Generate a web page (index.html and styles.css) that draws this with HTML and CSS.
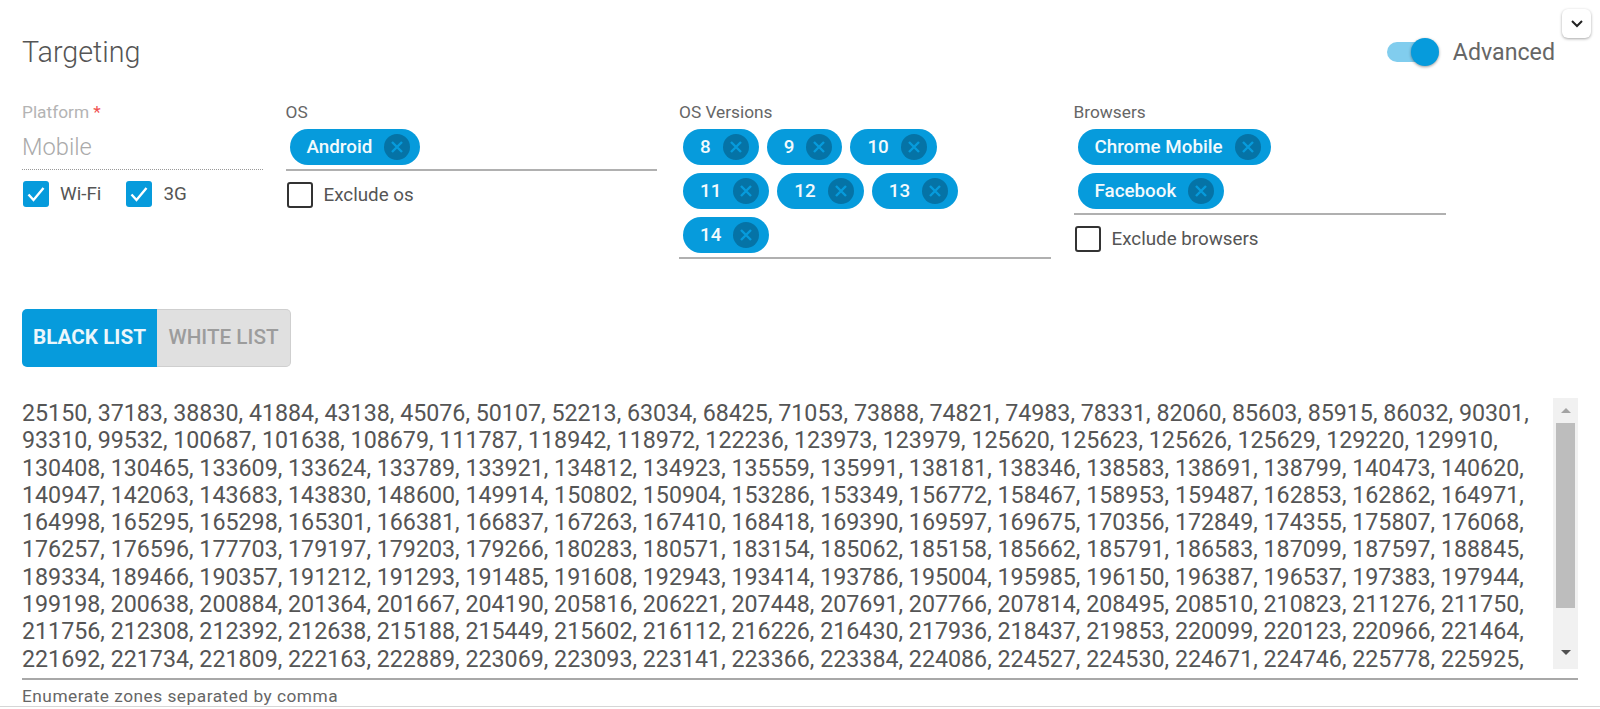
FILE: index.html
```html
<!DOCTYPE html>
<html lang="en">
<head>
<meta charset="utf-8">
<title>Targeting</title>
<link rel="stylesheet" href="styles.css">
</head>
<body>
<main class="panel">
  <button class="collapse" type="button" aria-label="Collapse">
    <svg width="14" height="9" viewBox="0 0 14 9"><path d="M2 2l5 5 5-5" fill="none" stroke="#222" stroke-width="2"/></svg>
  </button>
  <header class="head">
    <h1 class="title">Targeting</h1>
    <div class="advanced">
      <span class="toggle"><span class="knob"></span></span>
      <span class="advanced-label">Advanced</span>
    </div>
  </header>
  <section class="fields">
    <div class="col col-platform">
      <div class="label label-muted">Platform <span class="req">*</span></div>
      <div class="static">Mobile</div>
      <div class="checks">
        <label class="check"><span class="box on"><svg width="20" height="18" viewBox="0 0 20 18"><path d="M2.500 9.500l5 5.500 10-12" fill="none" stroke="#fff" stroke-width="2.400"/></svg></span>Wi-Fi</label>
        <label class="check"><span class="box on"><svg width="20" height="18" viewBox="0 0 20 18"><path d="M2.500 9.500l5 5.500 10-12" fill="none" stroke="#fff" stroke-width="2.400"/></svg></span>3G</label>
      </div>
    </div>
    <div class="col">
      <div class="label">OS</div>
      <div class="chips">
        <span class="chip">Android<span class="x"><svg width="14" height="14" viewBox="0 0 14 14"><path d="M2 2l10 10M12 2L2 12"/></svg></span></span>
      </div>
      <div class="checks"><label class="check"><span class="box"></span>Exclude os</label></div>
    </div>
    <div class="col">
      <div class="label">OS Versions</div>
      <div class="chips">
        <span class="chip">8<span class="x"><svg width="14" height="14" viewBox="0 0 14 14"><path d="M2 2l10 10M12 2L2 12"/></svg></span></span>
        <span class="chip">9<span class="x"><svg width="14" height="14" viewBox="0 0 14 14"><path d="M2 2l10 10M12 2L2 12"/></svg></span></span>
        <span class="chip">10<span class="x"><svg width="14" height="14" viewBox="0 0 14 14"><path d="M2 2l10 10M12 2L2 12"/></svg></span></span>
        <span class="chip">11<span class="x"><svg width="14" height="14" viewBox="0 0 14 14"><path d="M2 2l10 10M12 2L2 12"/></svg></span></span>
        <span class="chip">12<span class="x"><svg width="14" height="14" viewBox="0 0 14 14"><path d="M2 2l10 10M12 2L2 12"/></svg></span></span>
        <span class="chip">13<span class="x"><svg width="14" height="14" viewBox="0 0 14 14"><path d="M2 2l10 10M12 2L2 12"/></svg></span></span>
        <span class="chip">14<span class="x"><svg width="14" height="14" viewBox="0 0 14 14"><path d="M2 2l10 10M12 2L2 12"/></svg></span></span>
      </div>
    </div>
    <div class="col">
      <div class="label">Browsers</div>
      <div class="chips">
        <span class="chip">Chrome Mobile<span class="x"><svg width="14" height="14" viewBox="0 0 14 14"><path d="M2 2l10 10M12 2L2 12"/></svg></span></span>
        <span class="chip">Facebook<span class="x"><svg width="14" height="14" viewBox="0 0 14 14"><path d="M2 2l10 10M12 2L2 12"/></svg></span></span>
      </div>
      <div class="checks"><label class="check"><span class="box"></span>Exclude browsers</label></div>
    </div>
  </section>
  <div class="listmode">
    <button class="mode mode-on" type="button">BLACK LIST</button><button class="mode mode-off" type="button">WHITE LIST</button>
  </div>
  <section class="zones">
    <div class="zones-box">
      <div class="zones-text">25150, 37183, 38830, 41884, 43138, 45076, 50107, 52213, 63034, 68425, 71053, 73888, 74821, 74983, 78331, 82060, 85603, 85915, 86032, 90301,
93310, 99532, 100687, 101638, 108679, 111787, 118942, 118972, 122236, 123973, 123979, 125620, 125623, 125626, 125629, 129220, 129910,
130408, 130465, 133609, 133624, 133789, 133921, 134812, 134923, 135559, 135991, 138181, 138346, 138583, 138691, 138799, 140473, 140620,
140947, 142063, 143683, 143830, 148600, 149914, 150802, 150904, 153286, 153349, 156772, 158467, 158953, 159487, 162853, 162862, 164971,
164998, 165295, 165298, 165301, 166381, 166837, 167263, 167410, 168418, 169390, 169597, 169675, 170356, 172849, 174355, 175807, 176068,
176257, 176596, 177703, 179197, 179203, 179266, 180283, 180571, 183154, 185062, 185158, 185662, 185791, 186583, 187099, 187597, 188845,
189334, 189466, 190357, 191212, 191293, 191485, 191608, 192943, 193414, 193786, 195004, 195985, 196150, 196387, 196537, 197383, 197944,
199198, 200638, 200884, 201364, 201667, 204190, 205816, 206221, 207448, 207691, 207766, 207814, 208495, 208510, 210823, 211276, 211750,
211756, 212308, 212392, 212638, 215188, 215449, 215602, 216112, 216226, 216430, 217936, 218437, 219853, 220099, 220123, 220966, 221464,
221692, 221734, 221809, 222163, 222889, 223069, 223093, 223141, 223366, 223384, 224086, 224527, 224530, 224671, 224746, 225778, 225925,</div>
      <div class="scrollbar">
        <span class="arrow arrow-up"></span>
        <span class="thumb"></span>
        <span class="arrow arrow-down"></span>
      </div>
    </div>
    <div class="hint">Enumerate zones separated by comma</div>
  </section>
</main>
</body>
</html>
```
FILE: styles.css
```css
* { box-sizing: border-box; }
html, body { margin: 0; padding: 0; height: 100%; background: #fff; overflow: hidden; }
body { font-family: Roboto, "Liberation Sans", sans-serif; color: #555; }
.panel { position: relative; height: 707px; border-bottom: 1px solid #d6d6d6; padding: 0 22px; }
.collapse { position: absolute; top: 9px; right: 9px; width: 29px; height: 29px; padding: 0; border: 0; border-radius: 6px; background: #fff; box-shadow: 0 1px 3px rgba(0,0,0,.35); display: flex; align-items: center; justify-content: center; }
.head { display: flex; justify-content: space-between; align-items: center; height: 104px; padding-right: 23px; }
.title { margin: 0; font-size: 28.700px; font-weight: 300; color: #555; }
.advanced { display: flex; align-items: center; gap: 21px; }
.toggle { position: relative; display: block; width: 45px; height: 20px; border-radius: 10px; background: #81cdee; }
.knob { position: absolute; top: -4px; right: -7px; width: 28px; height: 28px; border-radius: 50%; background: #069bdc; box-shadow: 0 1px 3px rgba(0,0,0,.4); }
.advanced-label { font-size: 23.200px; font-weight: 400; color: #666; }
.fields { display: grid; grid-template-columns: 241px 371px 372px 372px; column-gap: 22.500px; height: 205px; }
.label { font-size: 17.300px; line-height: 16px; color: #666; height: 25px; }
.label-muted { color: #b4b4b4; }
.req { color: #f05050; }
.static { height: 41px; border-bottom: 1px dotted #999; font-size: 23.700px; line-height: 36px; font-weight: 300; color: #aaa; }
.chips { display: flex; flex-wrap: wrap; gap: 8px; padding: 0 30px 4px 4px; border-bottom: 2px solid #b0b0b0; }
.chip { display: flex; align-items: center; justify-content: space-between; height: 36px; padding: 0 10px 0 17px; gap: 12px; border-radius: 18px; background: #069bdc; color: #f2fafd; font-size: 18.800px; font-weight: 500; }
.x { display: flex; align-items: center; justify-content: center; width: 26px; height: 26px; border-radius: 50%; background: #0573a6; }
.x path { fill: none; stroke: #069bdc; stroke-width: 2.400; }
.checks { display: flex; gap: 24px; padding-top: 11px; }
.check { display: flex; align-items: center; gap: 11px; font-size: 18.800px; color: #555; }
.box { display: flex; align-items: center; justify-content: center; width: 26px; height: 26px; margin-left: 1px; border: 2px solid #333; border-radius: 3px; }
.box.on { border: 0; background: #069bdc; }
.listmode { display: flex; }
.mode { width: 135px; height: 58px; padding: 0 0 3px; border: 0; font-family: inherit; font-size: 20.700px; font-weight: 700; }
.mode-on { background: #069bdc; color: #ebf6fb; border-radius: 5px 0 0 5px; }
.mode-off { width: 134px; background: #e0e0e0; color: #9c9c9c; border: 1px solid #cfcfcf; border-left: 0; border-radius: 0 5px 5px 0; font-weight: 500; }
.zones { padding-top: 31px; }
.zones-box { display: flex; justify-content: space-between; width: 1556px; height: 282px; border-bottom: 2px solid #a8a8a8; }
.zones-text { white-space: pre; font-size: 23.240px; line-height: 27.300px; color: #555; padding-top: 2px; }
.scrollbar { display: flex; flex-direction: column; align-items: center; width: 25px; height: 271px; background: #f1f1f1; }
.arrow { width: 0; height: 0; border-left: 5px solid transparent; border-right: 5px solid transparent; }
.arrow-up { margin-top: 10px; border-bottom: 5px solid #a3a3a3; }
.thumb { width: 19px; height: 185px; margin-top: 10px; background: #bdbdbd; }
.arrow-down { margin-top: 42px; border-top: 5px solid #505050; }
.hint { font-size: 17.300px; letter-spacing: .5px; line-height: 18px; padding-top: 7px; color: #666; }
```
